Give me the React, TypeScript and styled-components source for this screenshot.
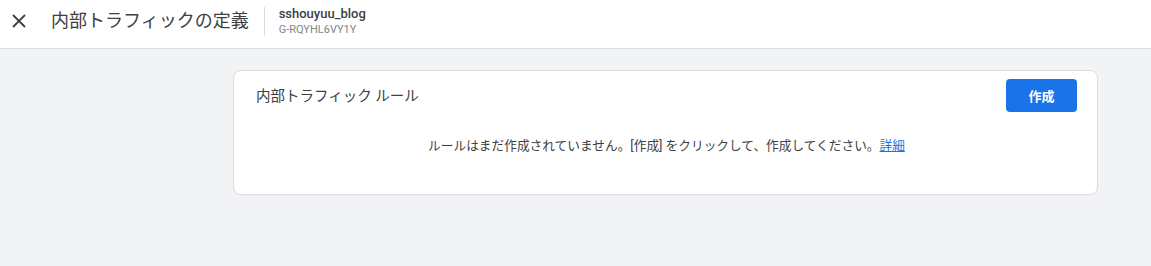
import React from 'react';
import styled, { createGlobalStyle } from 'styled-components';

const GlobalStyle = createGlobalStyle`
  html, body {
    margin: 0;
    padding: 0;
    background: #f1f3f4;
    font-family: Roboto, "Noto Sans CJK JP", sans-serif;
  }
`;

const Page = styled.div`
  width: 1151px;
  height: 266px;
  background: #f1f3f4;
`;

const TopBar = styled.header`
  height: 49px;
  box-sizing: border-box;
  background: #fff;
  border-bottom: 1px solid #dadce0;
  display: flex;
  align-items: center;
  padding: 0 0 6px 8px;
`;

const CloseButton = styled.button`
  width: 22px;
  height: 22px;
  padding: 0;
  border: none;
  background: none;
  display: flex;
  align-items: center;
  justify-content: center;
  color: #3c4043;
  cursor: pointer;
`;

const Title = styled.h1`
  margin: 0 0 0 21px;
  font-size: 18px;
  font-weight: 400;
  color: #3c4043;
  line-height: 24px;
`;

const Divider = styled.div`
  width: 1px;
  height: 29px;
  background: #dadce0;
  margin: 0 14px 0 15px;
`;

const Property = styled.div`
  display: flex;
  flex-direction: column;
`;

const PropName = styled.span`
  font-size: 13px;
  font-weight: 500;
  color: #3c4043;
  line-height: 16px;
`;

const PropId = styled.span`
  font-size: 11px;
  color: #80868b;
  line-height: 14px;
  margin-top: 1px;
`;

const Content = styled.main`
  padding: 21px 53px 0 233px;
`;

const Card = styled.section`
  width: 865px;
  box-sizing: border-box;
  background: #fff;
  border: 1px solid #dadce0;
  border-radius: 8px;
  padding: 8px 20px 38px 22px;
`;

const CardHeader = styled.div`
  display: flex;
  align-items: center;
  justify-content: space-between;
`;

const CardTitle = styled.h2`
  margin: 0 0 3px;
  font-size: 14.5px;
  font-weight: 400;
  color: #3c4043;
`;

const PrimaryButton = styled.button`
  width: 71px;
  height: 33px;
  border: none;
  border-radius: 4px;
  background: #1a73e8;
  color: #fff;
  font-family: inherit;
  font-size: 13px;
  font-weight: 700;
  cursor: pointer;
`;

const EmptyMessage = styled.p`
  margin: 24px 0 0;
  text-align: center;
  font-size: 12.7px;
  line-height: 20px;
  color: #3c4043;
`;

const Link = styled.a`
  color: #1a73e8;
  text-decoration: underline;
`;

const App: React.FC = () => {
  return (
    <Page>
      <GlobalStyle />
      <TopBar>
        <CloseButton aria-label="閉じる">
          <svg width="14" height="14" viewBox="0 0 14 14">
            <path d="M1 1L13 13M13 1L1 13" stroke="#3c4043" strokeWidth="1.8" fill="none" />
          </svg>
        </CloseButton>
        <Title>内部トラフィックの定義</Title>
        <Divider />
        <Property>
          <PropName>sshouyuu_blog</PropName>
          <PropId>G-RQYHL6VY1Y</PropId>
        </Property>
      </TopBar>
      <Content>
        <Card>
          <CardHeader>
            <CardTitle>内部トラフィック ルール</CardTitle>
            <PrimaryButton>作成</PrimaryButton>
          </CardHeader>
          <EmptyMessage>
            ルールはまだ作成されていません。[作成] をクリックして、作成してください。<Link href="#">詳細</Link>
          </EmptyMessage>
        </Card>
      </Content>
    </Page>
  );
};

export default App;
